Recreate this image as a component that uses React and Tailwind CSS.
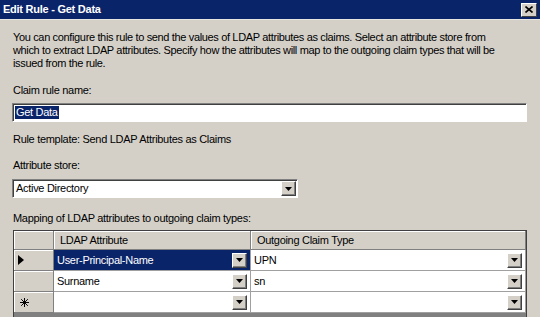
import React from "react";

const Arrow = () => (
  <svg width="7" height="4" viewBox="0 0 7 4" className="block">
    <polygon points="0,0 7,0 3.5,4" fill="#000" />
  </svg>
);

const DropBtn = ({ className = "" }) => (
  <div
    className={
      "flex items-center justify-center bg-[#d4d0c8] border border-t-white border-l-white border-r-[#404040] border-b-[#404040] shadow-[inset_-1px_-1px_0_#808080] " +
      className
    }
  >
    <Arrow />
  </div>
);

const Cell = ({ children, selected }) => (
  <div
    className={
      "flex items-center h-full border-r border-b border-[#a0a0a0] " +
      (selected ? "bg-[#0a246a] text-white" : "bg-white text-black")
    }
  >
    <div className="flex-1 pl-[3px] whitespace-nowrap">{children}</div>
    <DropBtn className="w-[15px] h-[15px] mr-[3px]" />
  </div>
);

const RowHead = ({ children }) => (
  <div className="flex items-center h-full bg-[#d4d0c8] border-r border-b border-[#808080] shadow-[inset_1px_1px_0_#ffffff] pl-[4px]">
    {children}
  </div>
);

export default function App() {
  return (
    <div
      className="w-[540px] h-[317px] overflow-hidden bg-[#d4d0c8] text-black text-[11px] leading-[13px] tracking-[-0.3px]"
      style={{ fontFamily: '"Liberation Sans", Arial, sans-serif' }}
    >
      {/* Title bar */}
      <div className="h-[19px] bg-[#0a246a] flex items-center justify-between pl-[3px] pr-[3px]">
        <span className="text-white font-bold text-[11px] tracking-[-0.25px]">
          Edit Rule - Get Data
        </span>
        <div className="w-[16px] h-[14px] bg-[#d4d0c8] border border-t-white border-l-white border-r-[#404040] border-b-[#404040] flex items-center justify-center">
          <svg width="8" height="7" viewBox="0 0 8 7">
            <path d="M0.5 0.5 L7.5 6.5 M7.5 0.5 L0.5 6.5" stroke="#000" strokeWidth="1.6" />
          </svg>
        </div>
      </div>
      <div className="h-px bg-[#e8e6e1]" />

      <div className="pl-[13px] pr-[13px]">
        <div className="mt-[11px] whitespace-nowrap tracking-[-0.35px]">
          <div>You can configure this rule to send the values of LDAP attributes as claims. Select an attribute store from</div>
          <div>which to extract LDAP attributes. Specify how the attributes will map to the outgoing claim types that will be</div>
          <div>issued from the rule.</div>
        </div>

        <div className="mt-[14px]">Claim rule name:</div>
        <div className="mt-[6px] ml-[-1px] w-[515px] h-[19px] bg-white border border-t-[#808080] border-l-[#808080] border-b-white border-r-white shadow-[inset_1px_1px_0_#404040] flex items-center pl-[2px]">
          <span className="bg-[#0a246a] text-white px-px">Get Data</span>
        </div>

        <div className="mt-[11px]">Rule template: Send LDAP Attributes as Claims</div>

        <div className="mt-[13px]">Attribute store:</div>
        <div className="mt-[7px] ml-[-1px] w-[286px] h-[19px] bg-white border border-t-[#808080] border-l-[#808080] border-b-white border-r-white shadow-[inset_1px_1px_0_#404040] flex items-center pl-[3px] pr-[1px]">
          <span className="flex-1">Active Directory</span>
          <DropBtn className="w-[15px] h-[15px]" />
        </div>

        <div className="mt-[14px]">Mapping of LDAP attributes to outgoing claim types:</div>

        <div className="mt-[5px] w-[514px] h-[100px] bg-[#808080] border border-t-[#404040] border-l-[#404040] border-r-[#404040] border-b-transparent">
          <div className="grid grid-cols-[40px_197px_1fr] grid-rows-[19px_21px_21px_21px]">
            <RowHead />
            <div className="flex items-center h-full bg-[#d4d0c8] border-r border-b border-[#808080] shadow-[inset_1px_1px_0_#ffffff] pl-[6px]">LDAP Attribute</div>
            <div className="flex items-center h-full bg-[#d4d0c8] border-r border-b border-[#808080] shadow-[inset_1px_1px_0_#ffffff] pl-[6px]">Outgoing Claim Type</div>

            <RowHead>
              <svg width="6" height="10" viewBox="0 0 6 10">
                <polygon points="0,0 6,5 0,10" fill="#000" />
              </svg>
            </RowHead>
            <Cell selected>User-Principal-Name</Cell>
            <Cell>UPN</Cell>

            <RowHead />
            <Cell>Surname</Cell>
            <Cell>sn</Cell>

            <RowHead>
              <svg width="9" height="9" viewBox="0 0 9 9" className="ml-[2px]">
                <path d="M4.5 0 V9 M0 4.5 H9 M1.2 1.2 L7.8 7.8 M7.8 1.2 L1.2 7.8" stroke="#000" strokeWidth="1" />
              </svg>
            </RowHead>
            <Cell></Cell>
            <Cell></Cell>
          </div>
        </div>
      </div>
    </div>
  );
}
